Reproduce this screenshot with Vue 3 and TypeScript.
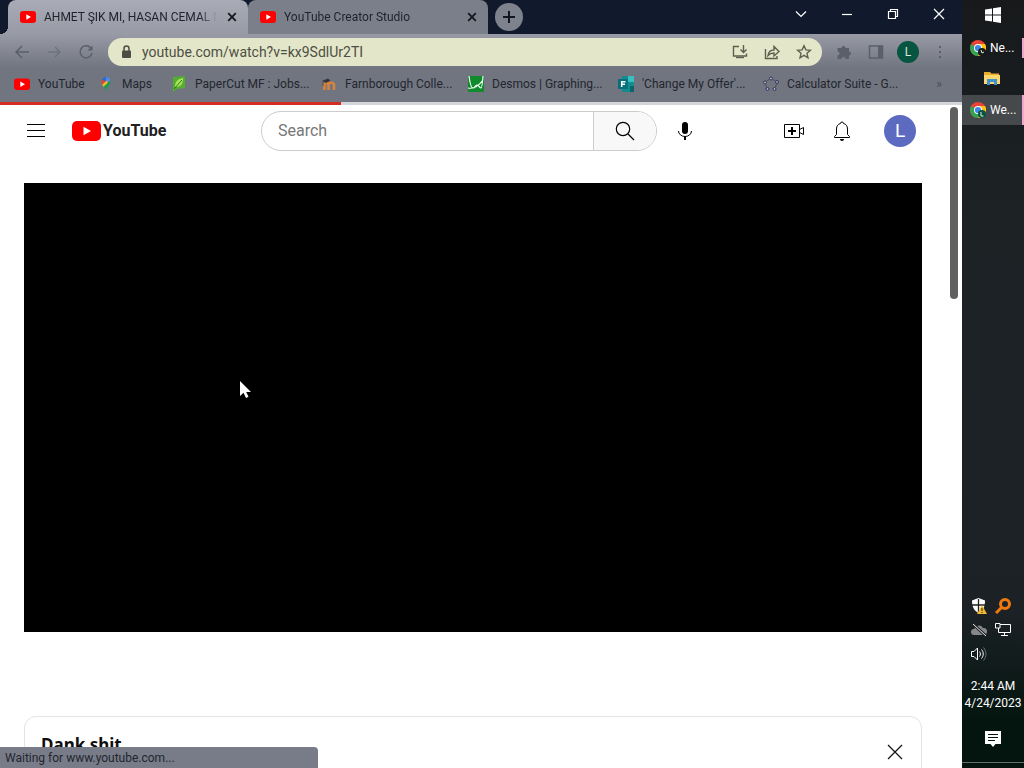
<script setup lang="ts">
import { ref } from 'vue'

interface Tab { title: string; active: boolean }
interface Bookmark { label: string; icon: string }

const tabs = ref<Tab[]>([
  { title: 'AHMET ŞIK MI, HASAN CEMAL Mİ', active: true },
  { title: 'YouTube Creator Studio', active: false },
])
const bookmarks: Bookmark[] = [
  { label: 'YouTube', icon: 'youtube' },
  { label: 'Maps', icon: 'maps' },
  { label: 'PaperCut MF : Jobs...', icon: 'papercut' },
  { label: 'Farnborough Colle...', icon: 'moodle' },
  { label: 'Desmos | Graphing...', icon: 'desmos' },
  { label: "'Change My Offer'...", icon: 'forms' },
  { label: 'Calculator Suite - G...', icon: 'geogebra' },
]
const address = ref('youtube.com/watch?v=kx9SdlUr2TI')
const query = ref('')
const progress = ref(35.4)
</script>

<template>
  <div class="desktop">
    <div class="browser">
      <div class="tabstrip">
        <div v-for="tab in tabs" :key="tab.title" class="tab" :class="{ active: tab.active }">
          <svg class="i16" viewBox="0 0 16 16"><rect y="2" width="16" height="12" rx="3" fill="#f00" /><path d="M6.3 5.2v5.6L11 8z" fill="#fff" /></svg>
          <span class="tab-title">{{ tab.title }}</span>
          <button class="tab-close" aria-label="Close tab">
            <svg width="10" height="10" viewBox="0 0 10 10"><path d="M1.2 1.2l7.6 7.6M8.8 1.2L1.2 8.8" stroke="#15171d" stroke-width="1.8" /></svg>
          </button>
        </div>
        <button class="new-tab" aria-label="New tab">
          <svg width="14" height="14" viewBox="0 0 14 14"><path d="M7 1v12M1 7h12" stroke="#12151d" stroke-width="2" /></svg>
        </button>
        <div class="window-controls">
          <button aria-label="Search tabs"><svg width="12" height="12" viewBox="0 0 12 12"><path d="M1 3.5l5 5 5-5" /></svg></button>
          <button aria-label="Minimize"><svg width="12" height="12" viewBox="0 0 12 12"><path d="M1 6.5h10" /></svg></button>
          <button aria-label="Restore"><svg width="12" height="12" viewBox="0 0 12 12"><path d="M1.5 3.5h7v7h-7zM3.500 3.500v-2h7v7h-2" /></svg></button>
          <button aria-label="Close window"><svg width="12" height="12" viewBox="0 0 12 12"><path d="M1 1l10 10M11 1L1 11" /></svg></button>
        </div>
      </div>

      <div class="chrome">
        <div class="toolbar">
          <div class="nav">
            <button aria-label="Back"><svg class="i16" viewBox="0 0 16 16"><path d="M15 8H2M8 2L2 8l6 6" /></svg></button>
            <button class="faint" aria-label="Forward"><svg class="i16" viewBox="0 0 16 16"><path d="M2 8h12M9 3l5 5-5 5" /></svg></button>
            <button aria-label="Reload"><svg class="i16" viewBox="0 0 16 16"><path d="M12.700 4A6 6 0 1 0 14 9" /><path class="solid" d="M14.500 1.500v5h-5z" /></svg></button>
          </div>
          <div class="omnibox">
            <svg class="i16" viewBox="0 0 16 16"><rect x="4" y="6.500" width="9" height="7.500" rx="1" fill="#4c4e46" /><path d="M6 7V4.500a2.500 2.500 0 0 1 5 0V7" fill="none" stroke="#4c4e46" /></svg>
            <input v-model="address" aria-label="Address" type="text" />
            <button aria-label="Install"><svg class="i16" viewBox="0 0 16 16"><path d="M7 2.500H1.500v9.500h13V9.500M11.500 1v7M8.500 5.500l3 3 3-3" /><path d="M4 13.500h8" stroke-width="2" /></svg></button>
            <button aria-label="Share"><svg class="i16" viewBox="0 0 16 16"><path d="M1.500 5v9.500H13V12M4 11.500C4.500 8 7 6 10 6V2.500l5 5-5 4.500V9C7.500 9 5.500 9.800 4 11.500z" /></svg></button>
            <button aria-label="Bookmark this tab"><svg class="i16" viewBox="0 0 16 16"><path d="M8 1.700l1.900 4.200 4.500.4-3.400 3 1 4.500-4-2.400-4 2.400 1-4.500-3.400-3 4.500-.4z" /></svg></button>
          </div>
          <div class="tools">
            <button aria-label="Extensions"><svg class="i16" viewBox="0 0 16 16"><path class="solid" d="M1.500 4H5.500a2 2 0 1 1 4 0H13v3.500a2 2 0 1 1 0 4V15H9.500a2 2 0 0 0-4 0H1.500v-3.500a2 2 0 0 0 0-4z" /></svg></button>
            <button aria-label="Side panel"><svg class="i16" viewBox="0 0 16 16"><path d="M1.500 2h13v12h-13z" /><path class="solid" d="M10 2h4.500v12H10z" /></svg></button>
            <button class="profile" aria-label="Profile">L</button>
            <button aria-label="Menu"><svg class="i16" viewBox="0 0 16 16"><path class="solid" d="M7 2h2v2H7zM7 7h2v2H7zM7 12h2v2H7z" /></svg></button>
          </div>
        </div>

        <nav class="bookmarks" aria-label="Bookmarks">
          <a v-for="b in bookmarks" :key="b.label" href="#">
            <svg v-if="b.icon === 'youtube'" class="i16" viewBox="0 0 16 16"><rect y="2.500" width="16" height="11.500" rx="3" fill="#f00" /><path d="M6.300 5.500v5.500L11 8.200z" fill="#fff" /></svg>
            <svg v-else-if="b.icon === 'maps'" class="i16" viewBox="0 0 16 16"><path d="M8 1a4.500 4.500 0 0 1 4.300 3.500L8 8z" fill="#4c8bf5" /><path d="M8 1C6 1 4.300 2.500 3.800 4L8 6z" fill="#3268cf" /><path d="M3.800 3.700C3.200 5 3.300 7 4.300 8.500L8 5z" fill="#de4335" /><path d="M4.300 8.500L9 4.500l1 3.500-4.300 3z" fill="#f6bd22" /><path d="M12.300 4.500c.8 4-3 5.500-4.300 10.500-.4-2-1.300-3-2.300-4.500z" fill="#219a50" /></svg>
            <svg v-else-if="b.icon === 'papercut'" class="i16" viewBox="0 0 16 16"><path d="M2 1l12-1v12l-8 1-4 3z" fill="#54ad31" /><path d="M4 11C4 5 7 3 12 2c0 6-2 8-6 9z" fill="#a8e557" /><path d="M3 13l8-9" stroke="#27751f" /></svg>
            <svg v-else-if="b.icon === 'moodle'" class="i16" viewBox="0 0 16 16"><path d="M3.500 14V9c0-3 4-3 4 0v5M7.500 9c0-3 5.500-3 5.500 0v5" fill="none" stroke="#d78339" stroke-width="2.600" /><path d="M1 5l6-2.500 2.500 2L5 7z" fill="#34343a" /><path d="M2 5v5" stroke="#55535a" /></svg>
            <svg v-else-if="b.icon === 'desmos'" class="i16" viewBox="0 0 16 16"><path d="M0 0h16v16H0z" fill="#108a2d" /><path d="M1 0c1 8 2 12 4 12 2.500 0 2-3 4-3 2.500 0 2 3 4 3 1 0 1.500-5 2-12M0 12c5 1 10-1 15-8" fill="none" stroke="#f2fff4" stroke-width="1.200" /></svg>
            <svg v-else-if="b.icon === 'forms'" class="i16" viewBox="0 0 16 16"><path d="M4 0h12v16H4z" fill="#138c90" /><path d="M10 0h6v6h-6z" fill="#38bfc0" /><path d="M12 10h4v6h-4z" fill="#0a666b" /><path d="M0 3h10v10H0z" fill="#07707b" /><path d="M3.700 11V5.700H7.500M3.700 8.300H7" fill="none" stroke="#fff" stroke-width="1.500" /></svg>
            <svg v-else class="i16" viewBox="0 0 16 16"><g fill="#a9abdd" stroke="#34364c"><circle cx="8" cy="2.500" r="1.500" /><circle cx="2" cy="6.500" r="1.500" /><circle cx="14" cy="6" r="1.500" /><circle cx="4.500" cy="13" r="1.500" /><circle cx="11.500" cy="13" r="1.500" /></g><path d="M3.500 5L6 3.500M10 3.500L12.500 5M2.500 8.500L3.500 11M13.500 8L12.500 11" stroke="#4a4d5e" /></svg>
            <span>{{ b.label }}</span>
          </a>
          <button class="overflow" aria-label="More bookmarks">»</button>
        </nav>
      </div>

      <main class="page">
        <div class="progress"><div class="progress-bar" :style="{ width: progress + '%' }"></div></div>
        <header class="masthead">
          <div class="start">
            <button aria-label="Guide"><svg class="i24" viewBox="0 0 24 24"><path d="M3 5.500h18M3 11.500h18M3 17.500h18" /></svg></button>
            <a class="logo" href="#" aria-label="YouTube home">
              <svg width="29" height="20" viewBox="0 0 29 20"><rect width="29" height="20" rx="5" fill="#f00" /><path d="M11.500 5.700v8.600L19 10z" fill="#fff" /></svg>
              <span>YouTube</span>
            </a>
          </div>
          <div class="middle">
            <form class="search" @submit.prevent>
              <input v-model="query" type="text" placeholder="Search" aria-label="Search" />
              <button type="submit" aria-label="Search"><svg class="i24" viewBox="0 0 24 24"><circle cx="10" cy="10" r="6.700" /><path d="M15 15l6 6" /></svg></button>
            </form>
            <button aria-label="Search with your voice"><svg class="i24" viewBox="0 0 24 24"><rect x="9" y="3" width="6" height="12" rx="3" fill="#030303" /><path d="M5.500 12a6.500 5.500 0 0 0 13 0" /><path class="solid" d="M11 17.500h2V21h-2z" /></svg></button>
          </div>
          <div class="end">
            <button aria-label="Create"><svg class="i24" viewBox="0 0 24 24"><path d="M2.500 5.500h15v13h-15zM17.500 10.500l4-2v7l-4-2" /><path class="solid" d="M9 8h2v3h3v2h-3v3H9v-3H6v-2h3z" /></svg></button>
            <button aria-label="Notifications"><svg class="i24" viewBox="0 0 24 24"><path d="M4.500 18.500v-1l2-2V10c0-3 1.500-5 4-5.500a1.500 1.500 0 0 1 3 0c2.500.5 4 2.500 4 5.500v5.500l2 2v1z" /><path class="solid" d="M10 20h4a2 2 0 0 1-4 0z" /></svg></button>
            <button class="avatar" aria-label="Account">L</button>
          </div>
        </header>
        <section class="player" aria-label="Video player">
          <svg class="pointer" width="11" height="17" viewBox="0 0 11 17"><path d="M0 0v15l3.500-3.200L6 17l2.500-1.200-2.300-4.800H11z" fill="#fff" /></svg>
        </section>
        <section class="panel">
          <h2>Dank shit</h2>
          <button aria-label="Close panel"><svg width="16" height="16" viewBox="0 0 16 16"><path d="M1 1l14 14M15 1L1 15" /></svg></button>
        </section>
        <div class="scroll-thumb"></div>
      </main>
      <div class="status">Waiting for www.youtube.com...</div>
    </div>

    <aside class="taskbar">
      <button class="start-button" aria-label="Start"><svg class="i16" viewBox="0 0 16 16"><path d="M0 2.500l7-1v6H0zM8 1.300L16 0v7.500H8zM0 8.500h7v6l-7-1zM8 8.500h8V16l-8-1.300z" fill="#fff" /></svg></button>
      <button v-for="(name, n) in ['Ne...', 'Explorer', 'We...']" :key="name" class="task" :class="{ current: n === 2, folder: n === 1 }">
        <svg v-if="n === 1" class="i16" viewBox="0 0 16 16" role="img" aria-label="File Explorer"><path d="M0 2h6l1.500 1.500H15V14H0z" fill="#e9ad2e" /><path d="M0 5h16v9H0z" fill="#fbd76c" /><path d="M3 15V9h10v6h-3v-3H6v3z" fill="#3f91cf" /></svg>
        <template v-else>
          <svg class="i16" viewBox="0 0 16 16"><circle cx="8" cy="8" r="8" fill="#e94335" /><path d="M8 8L1.100 4A8 8 0 0 0 8 16l4-7z" fill="#34a353" /><path d="M8 4h7A8 8 0 0 1 8 16l4-7z" fill="#fbc116" /><circle cx="8" cy="8" r="4" fill="#fff" /><circle cx="8" cy="8" r="3.100" fill="#4285e8" /><circle cx="12" cy="12" r="4" :fill="n ? '#075541' : '#17191a'" /><path :d="n ? 'M11 10v4h2.500' : 'M11 10l1 3 2-1'" fill="none" stroke="#e5ebe7" /></svg>
          <span>{{ name }}</span>
        </template>
      </button>
      <div class="tray">
        <button aria-label="Security"><svg class="i16" viewBox="0 0 16 16"><path d="M1 2.500L7.500 0 14 2.500C14 9 12 12.500 7.500 15 3 12.500 1 9 1 2.500z" fill="#fff" /><path d="M7.500 1v13M1 7h13" stroke="#1b2023" stroke-width="1.300" /><path d="M11 7l5 9H6z" fill="#f4b731" /><path d="M11 10v3M11 14v1" stroke="#302606" /></svg></button>
        <button aria-label="Search utility"><svg class="i16" viewBox="0 0 16 16"><circle cx="10" cy="6" r="4.500" fill="none" stroke="#ef790e" stroke-width="3" /><path d="M7 9l-6 6" stroke="#ef790e" stroke-width="3" /></svg></button>
        <button aria-label="Cloud storage offline"><svg class="i16" viewBox="0 0 16 16"><path d="M3 13a3 3 0 0 1 0-6 5 5 0 0 1 9-1 3.500 3.500 0 0 1 1 7z" fill="#858789" /><path d="M2 2l13 12" stroke="#202326" stroke-width="3" /><path d="M2 2l13 12" stroke="#e7e8e8" /></svg></button>
        <button aria-label="Network"><svg class="i16" viewBox="0 0 16 16"><path d="M5 2.500h10.500v8H3.500V6M.5 1.500H5V6H.5zM9.500 10.500v3M6 13.500h7" fill="none" stroke="#fff" /></svg></button>
        <button aria-label="Volume"><svg class="i16" viewBox="0 0 16 16"><path d="M.5 5.500H3l3.500-3.500v12L3 10.500H.5zM8.500 5.500c1.200 1.500 1.200 3.500 0 5M10.500 3.500c2.300 2.700 2.300 6.300 0 9" fill="none" stroke="#fff" /><path d="M12.500 1.500c3.300 4 3.300 9 0 13" fill="none" stroke="#6c7073" /></svg></button>
      </div>
      <div class="clock"><time>2:44 AM</time><time>4/24/2023</time></div>
      <button class="action" aria-label="Action center"><svg class="i16" viewBox="0 0 16 16"><path d="M0 0h16v13h-5.500L8 16l-2.500-3H0z" fill="#fff" /><path d="M3 3.500h10M3 6.500h10M3 9.500h7" stroke="#05140f" /></svg></button>
    </aside>
  </div>
</template>

<style>
html, body, #app { height: 100%; }
body { overflow: hidden; }
</style>

<style scoped>
* { box-sizing: border-box; }
button { display: flex; align-items: center; justify-content: center; padding: 0; border: 0; background: none; color: inherit; font: inherit; flex: none; }
input { min-width: 0; border: 0; outline: 0; background: none; }
a { color: inherit; text-decoration: none; }
svg { display: block; flex: none; }
.i16 { width: 16px; height: 16px; }
.i24 { width: 24px; height: 24px; }
.desktop { display: flex; height: 100vh; overflow: hidden; font: 12px/16px Roboto, "Open Sans", sans-serif; }
.browser { position: relative; display: flex; flex: 1; min-width: 0; flex-direction: column; background: #fff; }

.tabstrip { display: flex; height: 34px; padding-left: 8px; background: #111a2d; }
.tab { position: relative; display: flex; flex: 0 1 240px; min-width: 0; align-items: center; gap: 8px; padding: 0 9px 0 12px; border-radius: 8px 8px 0 0; background: #7b7f8a; color: #1f222a; }
.tab.active { background: linear-gradient(#a9abb6, #989aa5); }
.tab.active::before { position: absolute; bottom: 0; left: -8px; width: 8px; height: 8px; background: radial-gradient(circle at 0 0, transparent 8px, #989aa5 8px); content: ""; }
.tab-title { flex: 1; min-width: 0; overflow: hidden; white-space: nowrap; mask-image: linear-gradient(90deg, #000 90%, transparent); }
.tab-close { width: 14px; height: 16px; }
.new-tab { width: 28px; height: 28px; margin: 3px 0 0 7px; border-radius: 50%; background: #7e828c; }
.window-controls { display: flex; height: 28px; margin-left: auto; }
.window-controls button { width: 46px; }
.window-controls path { fill: none; stroke: #fff; stroke-width: 1.2; }

.chrome { background: linear-gradient(#989aa5, #71757f 50%, #71757f); }
.toolbar { display: flex; height: 36px; align-items: center; }
.toolbar path { stroke-width: 1.5; }
.nav { display: flex; width: 108px; gap: 16px; padding-left: 14px; }
.nav path, .tools path { fill: none; stroke: #5b5f6a; }
.nav .solid, .tools .solid { fill: #5b5f6a; stroke: none; }
.nav .faint { opacity: .5; }
.omnibox { display: flex; flex: 1; min-width: 0; height: 28px; align-items: center; gap: 16px; padding: 0 10px; border-radius: 14px; background: #e4e6c9; }
.omnibox input { flex: 1; margin-left: -8px; padding: 0; color: #4c4f44; font: 14px/20px Roboto, "Open Sans", sans-serif; }
.omnibox button path { fill: none; stroke: #5e604f; stroke-width: 1.4; }
.tools { display: flex; align-items: center; width: 140px; gap: 10px; padding-left: 11px; }
.tools button { width: 22px; height: 22px; }
.tools .profile { border-radius: 50%; background: #075541; color: #d8e9df; }
.bookmarks { display: grid; grid-template-columns: 84px 73px 150px 147px 150px 145px 1fr 30px; height: 32px; align-items: center; padding: 0 8px 4px 14px; color: #22262f; white-space: nowrap; }
.bookmarks a { display: flex; min-width: 0; gap: 8px; }
.bookmarks .overflow { color: #4b4e58; }

.page { position: relative; flex: 1; min-height: 0; overflow: hidden; padding-right: 16px; }
.progress { height: 3px; margin-right: -16px; background: #d4d5da; }
.progress-bar { height: 3px; background: #d42b22; }
.masthead { display: grid; grid-template-columns: 237px minmax(0, 1fr) 140px; height: 52px; align-items: center; padding: 0 24px; }
.masthead path, .masthead circle { stroke: #030303; stroke-width: 1; fill: none; }
.masthead .solid { fill: #030303; stroke: none; }
.masthead .search circle, .masthead .search path { stroke-width: 1.2; }
.start, .middle, .end, .logo { display: flex; align-items: center; }
.start { gap: 24px; }
.logo { gap: 2px; color: #212121; font: bold 16px/24px Roboto, sans-serif; }
.masthead .logo path { fill: #fff; stroke: none; }
.middle { gap: 16px; }
.search { display: flex; flex: 0 1 396px; min-width: 0; height: 40px; overflow: hidden; border: 1px solid #ccc; border-radius: 20px; }
.search input { flex: 1; padding: 0 16px; color: #222; font: 16px/24px Roboto, sans-serif; }
.search input::placeholder { color: #777; opacity: 1; }
.search button { width: 63px; border-left: 1px solid #ccc; background: #f8f8f8; }
.end { justify-content: flex-end; gap: 24px; padding-right: 6px; }
.avatar { width: 32px; height: 32px; margin-left: 6px; border-radius: 50%; background: #5c6bc0; color: #fff; font-size: 19px; }
.player { position: relative; aspect-ratio: 2 / 1; margin: 26px 24px 0; background: #000; }
.pointer { position: absolute; top: 44%; left: 24%; }
.panel { display: flex; justify-content: space-between; height: 200px; margin: 84px 24px 0; padding: 16px 18px 16px 16px; border: 1px solid #e4e4e4; border-radius: 12px; }
.panel h2 { margin: 0; color: #0f0f0f; font: bold 17px/24px "Noto Sans", "Open Sans", sans-serif; }
.panel button { height: 38px; }
.panel path { stroke: #0f0f0f; stroke-width: 1.2; }
.scroll-thumb { position: absolute; top: 5px; right: 4px; width: 8px; height: 192px; border-radius: 4px; background: #606060; }
.status { position: absolute; bottom: 0; left: 0; width: 318px; height: 21px; padding: 3px 5px; border-radius: 0 4px 0 0; background: #777c88; color: #23262e; }

.taskbar { display: flex; width: 62px; flex: none; flex-direction: column; background: linear-gradient(#17191b, #1d2325 30%, #1b2125 80%, #04150f 94%); color: #fff; }
.start-button { height: 30px; }
.task { height: 30px; gap: 4px; justify-content: flex-start; margin-top: 3px; padding-left: 8px; border-right: 2px solid transparent; border-image: linear-gradient(transparent 5px, #f0a6cf 5px, #f0a6cf 25px, transparent 25px) 0 2 0 0; }
.task.folder { justify-content: center; margin-top: 0; padding: 0; border-image: none; }
.task.current { margin-top: 2px; background: #46494c; border-image: none; border-right-color: #f0a6cf; }
.tray { display: grid; grid-template-columns: 16px 16px; gap: 8px; margin: auto auto 0 9px; }
.clock { display: flex; flex-direction: column; align-items: center; margin-top: 16px; line-height: 17px; }
.action { height: 16px; margin: 19px 0 15px; }
.taskbar::after { height: 5px; border-top: 1px solid #646e6a; content: ""; }
</style>
